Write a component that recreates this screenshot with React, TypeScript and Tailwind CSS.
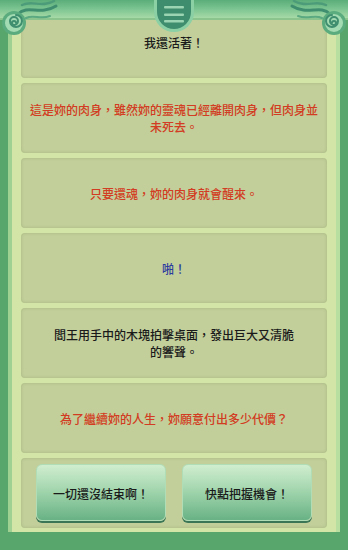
import React from "react";

const FONT = { fontFamily: '"Noto Sans CJK TC", "Noto Sans CJK SC", sans-serif' };

function Corner({ flip }: { flip?: boolean }) {
  return (
    <svg
      width="64"
      height="40"
      viewBox="0 0 64 40"
      className={flip ? "-scale-x-100" : ""}
    >
      <path d="M18 14 C28 4 40 16 56 6" stroke="#3f8e6f" strokeWidth="3" fill="none" strokeLinecap="round" />
      <path d="M22 5 C32 0 42 8 54 1" stroke="#4d9c79" strokeWidth="2.5" fill="none" strokeLinecap="round" />
      <path d="M26 18 C34 14 40 20 50 16" stroke="#5aa981" strokeWidth="2" fill="none" strokeLinecap="round" />
      <circle cx="14" cy="23" r="12" fill="#5aab7d" />
      <circle cx="14" cy="23" r="9" fill="#a3dbb2" />
      <path
        d="M14 23 m2 0 a2 2 0 1 0 -2 2 a4 4 0 1 0 -4 -4 a6 6 0 1 0 6 -6"
        stroke="#3f8e6f"
        strokeWidth="2"
        fill="none"
        strokeLinecap="round"
      />
    </svg>
  );
}

function Card({ children, h = "h-[70px]" }: { children: React.ReactNode; h?: string }) {
  return (
    <div
      className={`${h} rounded-[4px] bg-[#c2cf9b] shadow-[inset_0_0_3px_rgba(80,100,40,0.25)] flex items-center justify-center text-center px-[7px] text-[12px] leading-[17px] font-medium`}
    >
      {children}
    </div>
  );
}

function Btn({ children }: { children: React.ReactNode }) {
  return (
    <div className="w-[130px] h-[57px] rounded-[6px] bg-gradient-to-b from-[#d0eecf] via-[#9ed3aa] to-[#68b285] border border-[#b0dcb6] shadow-[0_2px_0_#3b7656] flex items-center justify-center pt-[3px] text-[12px] font-medium text-[#1a1a1a]">
      {children}
    </div>
  );
}

export default function App() {
  return (
    <div style={FONT} className="relative w-[348px] h-[550px] overflow-hidden bg-[#59a66c]">
      <div className="mx-[8px] mt-[3px] pt-[5px] pb-[4px] pl-[9px] pr-[9px] bg-[#d3e6a8] border-l-[4px] border-l-[#9fd192] border-r-[4px] border-r-[#b8df9f] flex flex-col gap-[5px]">
        <Card>
          <span className="text-[#1a1a1a] -mt-[2px]">我還活著！</span>
        </Card>
        <Card>
          <span className="text-[#d23c22]">
            這是妳的肉身，雖然妳的靈魂已經離開肉身，但肉身並
            <br />
            未死去。
          </span>
        </Card>
        <Card>
          <span className="text-[#d23c22]">只要還魂，妳的肉身就會醒來。</span>
        </Card>
        <Card>
          <span className="text-[#2b3a9e]">啪！</span>
        </Card>
        <Card>
          <span className="text-[#1a1a1a]">
            閻王用手中的木塊拍擊桌面，發出巨大又清脆
            <br />
            的響聲。
          </span>
        </Card>
        <Card>
          <span className="text-[#d23c22]">為了繼續妳的人生，妳願意付出多少代價？</span>
        </Card>
        <div className="h-[70px] rounded-[4px] bg-[#c2cf9b] shadow-[inset_0_0_3px_rgba(80,100,40,0.25)] flex items-center justify-center gap-[16px] pb-[2px]">
          <Btn>一切還沒結束啊！</Btn>
          <Btn>快點把握機會！</Btn>
        </div>
      </div>

      {/* header band overlay */}
      <div className="absolute top-0 left-0 w-[348px] h-[20px] bg-gradient-to-b from-[#5aad79] via-[#7cc592] to-[#a6d9a6] border-b-[2px] border-b-[#8cc48e]" />
      <div className="absolute top-0 left-0">
        <Corner />
      </div>
      <div className="absolute top-0 right-0">
        <Corner flip />
      </div>
      <div className="absolute top-0 left-[154px]">
        <svg width="40" height="32" viewBox="0 0 40 32">
          <path d="M0 0H40V12A20 20 0 0 1 0 12Z" fill="#8bcfa5" />
          <path d="M3 0H37V12A17 17 0 0 1 3 12Z" fill="#3f8d6f" />
          <rect x="10" y="6" width="20" height="2.5" rx="1" fill="#9ad4b2" />
          <rect x="10" y="13.5" width="20" height="2.5" rx="1" fill="#9ad4b2" />
          <rect x="10" y="20" width="20" height="2.5" rx="1" fill="#9ad4b2" />
        </svg>
      </div>
    </div>
  );
}
